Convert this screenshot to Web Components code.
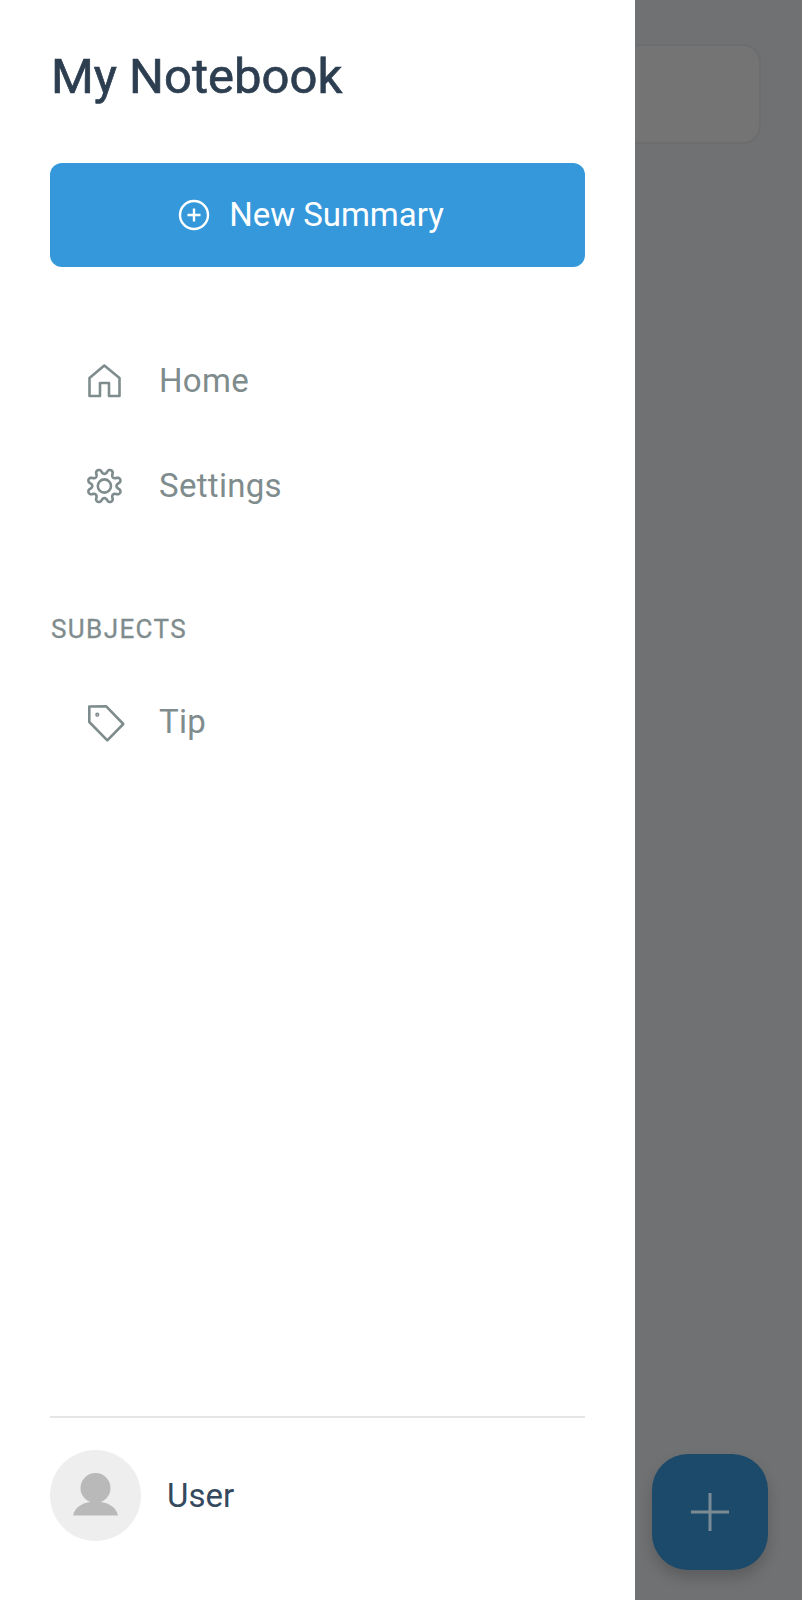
<!DOCTYPE html>
<html>
<head>
<meta charset="utf-8">
<style>
    html, body { margin: 0; height: 100%; background: #707173; }
    body { font-family: Roboto, "Liberation Sans", sans-serif; overflow: hidden; }
</style>
</head>
<body>
<app-screen>
    <side-drawer slot="drawer">
        <new-button>New Summary</new-button>
        <nav-list>
            <nav-item icon="home">Home</nav-item>
            <nav-item icon="gear">Settings</nav-item>
        </nav-list>
        <section-label>SUBJECTS</section-label>
        <nav-list>
            <nav-item icon="tag">Tip</nav-item>
        </nav-list>
        <user-footer slot="footer">User</user-footer>
    </side-drawer>
</app-screen>

<script>
// scalloped 8 lobe gear, polar curve so the lobes stay even
function gearPath() {
    const pts = [];
    for (let i = 0; i < 192; i++) {
        const t = (i / 192) * Math.PI * 2;
        const c = -Math.cos(8 * t);
        // flatten the wave a bit, lobes are round and not pointy
        const r = 14.6 + 2.5 * Math.sign(c) * Math.pow(Math.abs(c), 0.55);
        pts.push((18.4 + r * Math.cos(t)).toFixed(2) + ' ' + (18 + r * Math.sin(t)).toFixed(2));
    }
    return 'M' + pts.join('L') + 'Z';
}

const ICONS = {
    home: '<path d="M18.300 2.500 3.500 15v18H14V20h9v13h10.500V15Z"/>',
    gear: `<path d="${gearPath()}"/><circle cx="18.400" cy="18" r="6.600"/>`,
    tag: '<path d="M3.300 4.500 20 4.200 37.300 22 21.300 38.300 3.300 20Z"/><circle cx="11.300" cy="12.700" r=".8"/>'
};

class AppScreen extends HTMLElement {
    constructor() {
        super();
        this.attachShadow({ mode: 'open' });
        this.shadowRoot.innerHTML = `
            <style>
                :host { display: flex; position: relative; width: 802px; height: 1600px; overflow: hidden; }
                .scrim { flex: 1; padding: 44px 41px 0 0; background: #707173; }
                .card {
                    height: 100px;
                    box-sizing: border-box;
                    background: #747474;
                    border: 2px solid #6c6d6e;
                    border-left: 0;
                    border-radius: 0 18px 18px 0;
                }
                .fab {
                    position: absolute;
                    left: 652px;
                    top: 1454px;
                    width: 116px;
                    height: 116px;
                    border-radius: 36px;
                    background: #1b4a6b;
                    box-shadow: 0 8px 14px rgba(0, 0, 0, 0.18);
                    display: flex;
                    align-items: center;
                    justify-content: center;
                }
                svg { width: 40px; height: 40px; stroke: #7b8b96; stroke-width: 3; fill: none; }
            </style>
            <slot name="drawer"></slot>
            <div class="scrim"><div class="card"></div></div>
            <div class="fab">
                <svg viewBox="0 0 40 40"><path d="M20 1v38M1 20h38"/></svg>
            </div>
        `;
    }
}

class SideDrawer extends HTMLElement {
    constructor() {
        super();
        this.attachShadow({ mode: 'open' });
        this.shadowRoot.innerHTML = `
            <style>
                :host {
                    display: flex;
                    flex-direction: column;
                    box-sizing: border-box;
                    width: 635px;
                    height: 1600px;
                    padding: 0 50px;
                    background: #fff;
                }
                h1 {
                    margin: 45px 0 54px 1px;
                    height: 64px;
                    line-height: 64px;
                    font-size: 49px;
                    font-weight: 400;
                    -webkit-text-stroke: 0.7px #2c3e50;
                    color: #2c3e50;
                }
                .foot { margin-top: auto; }
            </style>
            <h1>My Notebook</h1>
            <slot></slot>
            <div class="foot"><slot name="footer"></slot></div>
        `;
    }
}

class NewButton extends HTMLElement {
    constructor() {
        super();
        this.attachShadow({ mode: 'open' });
        this.shadowRoot.innerHTML = `
            <style>
                :host {
                    display: flex;
                    align-items: center;
                    justify-content: center;
                    gap: 19px;
                    height: 104px;
                    margin-bottom: 61px;
                    padding-right: 13px;
                    border-radius: 12px;
                    background: #3498db;
                    color: #fff;
                    font-size: 33px;
                }
                span { position: relative; top: -1px; }
                svg { width: 32px; height: 32px; stroke: #fff; stroke-width: 2.4; fill: none; }
            </style>
            <svg viewBox="0 0 32 32"><circle cx="16" cy="16" r="14"/><path d="M16 9.500v13M9.500 16h13"/></svg>
            <span><slot></slot></span>
        `;
    }
}

class NavList extends HTMLElement {
    constructor() {
        super();
        this.attachShadow({ mode: 'open' });
        this.shadowRoot.innerHTML = `
            <style>:host { display: flex; flex-direction: column; }</style>
            <slot></slot>
        `;
    }
}

class NavItem extends HTMLElement {
    constructor() {
        super();
        this.attachShadow({ mode: 'open' });
        const icon = ICONS[this.getAttribute('icon')] || '';
        const box = this.getAttribute('icon') === 'tag' ? '0 0 40 40' : '0 0 36 36';
        this.shadowRoot.innerHTML = `
            <style>
                :host {
                    display: flex;
                    align-items: center;
                    gap: 37px;
                    height: 105px;
                    padding-left: 36px;
                    color: #7f8c8d;
                    font-size: 33px;
                    letter-spacing: 0.3px;
                }
                svg {
                    flex: none;
                    width: 36px;
                    height: 36px;
                    overflow: visible;
                    stroke: #7f8c8d;
                    stroke-width: 2.6;
                    stroke-linejoin: round;
                    fill: none;
                }
            </style>
            <svg viewBox="${box}" style="${box === '0 0 40 40' ? 'width:40px;height:40px;margin-right:-4px' : ''}">${icon}</svg>
            <slot></slot>
        `;
    }
}

class SectionLabel extends HTMLElement {
    constructor() {
        super();
        this.attachShadow({ mode: 'open' });
        this.shadowRoot.innerHTML = `
            <style>
                :host {
                    display: block;
                    margin: 76px 0 25px 1px;
                    line-height: 30px;
                    color: #7f8c8d;
                    font-size: 26px;
                    font-weight: 400;
                    letter-spacing: 1.4px;
                    -webkit-text-stroke: 0.3px #7f8c8d;
                }
            </style>
            <slot></slot>
        `;
    }
}

class UserFooter extends HTMLElement {
    constructor() {
        super();
        this.attachShadow({ mode: 'open' });
        this.shadowRoot.innerHTML = `
            <style>
                :host {
                    display: flex;
                    align-items: center;
                    gap: 26px;
                    height: 184px;
                    box-sizing: border-box;
                    padding-bottom: 27px;
                    border-top: 2px solid #e6e6e6;
                    color: #34495e;
                    font-size: 33px;
                }
                .avatar {
                    width: 91px;
                    height: 91px;
                    border-radius: 50%;
                    background: #eee;
                }
                svg { display: block; width: 91px; height: 91px; fill: #b9b9b9; }
            </style>
            <div class="avatar">
                <svg viewBox="0 0 91 91">
                    <circle cx="45.500" cy="38" r="15"/>
                    <path d="M23 65.500c2-9 11-14 22.500-14s20.500 5 22.500 14Z"/>
                </svg>
            </div>
            <slot></slot>
        `;
    }
}

customElements.define('app-screen', AppScreen);
customElements.define('side-drawer', SideDrawer);
customElements.define('new-button', NewButton);
customElements.define('nav-list', NavList);
customElements.define('nav-item', NavItem);
customElements.define('section-label', SectionLabel);
customElements.define('user-footer', UserFooter);
</script>
</body>
</html>
